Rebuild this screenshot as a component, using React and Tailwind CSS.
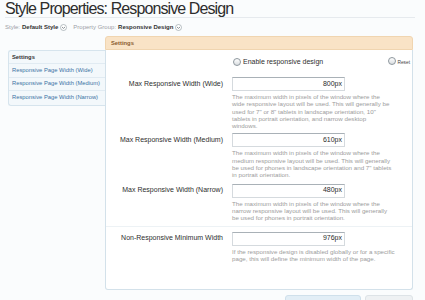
import React from "react";

const sans = "font-['Liberation_Sans','Arial',sans-serif]";

const rows = [
  {
    label: "Max Responsive Width (Wide)",
    value: "800px",
    gap: "mt-[10px]",
    desc: [
      "The maximum width in pixels of the window where the",
      "wide responsive layout will be used. This will generally be",
      'used for 7" or 8" tablets in landscape orientation, 10"',
      "tablets in portrait orientation, and narrow desktop",
      "windows.",
    ],
  },
  {
    label: "Max Responsive Width (Medium)",
    value: "610px",
    gap: "mt-[4px]",
    desc: [
      "The maximum width in pixels of the window where the",
      "medium responsive layout will be used. This will generally",
      'be used for phones in landscape orientation and 7" tablets',
      "in portrait orientation.",
    ],
  },
  {
    label: "Max Responsive Width (Narrow)",
    value: "480px",
    gap: "mt-[5px]",
    desc: [
      "The maximum width in pixels of the window where the",
      "narrow responsive layout will be used. This will generally",
      "be used for phones in portrait orientation.",
    ],
  },
];

const Chevron = () => (
  <svg width="7" height="7" viewBox="0 0 7 7" className="ml-[2px] shrink-0">
    <circle cx="3.5" cy="3.5" r="3" fill="#fff" stroke="#9aa3aa" strokeWidth="0.7" />
    <path d="M2 3 L3.5 4.4 L5 3" fill="none" stroke="#6d767d" strokeWidth="0.8" />
  </svg>
);

const Radio = ({ size = "w-[8px] h-[8px]" }) => (
  <span
    className={`${size} rounded-full border border-[#8e979e] bg-gradient-to-b from-white to-[#d9dde0] shrink-0`}
  />
);

const Row = ({ row }) => (
  <div className={`flex ${row.gap}`}>
    <div className="w-[117px] h-[14px] flex items-center justify-end text-[7px] text-[#2e2e2e] whitespace-nowrap">
      {row.label}
    </div>
    <div className="ml-[9px]">
      <div className="w-[113px] h-[14px] bg-white border border-[#d5dade] border-t-[#a9b1b7] flex items-center justify-end pr-[2px] text-[7px] text-[#2b2b2b]">
        {row.value}
      </div>
      <div className="mt-[2px] text-[6.2px] leading-[7.3px] text-[#9c9c9c]">
        {row.desc.map((line) => (
          <div key={line} className="whitespace-nowrap">
            {line}
          </div>
        ))}
      </div>
    </div>
  </div>
);

export default function App() {
  return (
    <div className={`h-[300px] overflow-hidden bg-[#fafcfd] ${sans}`}>
      <div className="pl-[5px] pr-[10px]">
        <h1 className="text-[16px] leading-[17px] tracking-[-0.9px] text-[#2d2d2d] border-b border-[#e6eaee] whitespace-nowrap">
          Style Properties: Responsive Design
        </h1>
        <div className="mt-[5px] h-[8px] flex items-center text-[6px] whitespace-nowrap">
          <span className="text-[#9aa0a6]">Style:</span>
          <span className="ml-[2px] font-bold text-[#333]">Default Style</span>
          <Chevron />
          <span className="ml-[6px] text-[#9aa0a6]">Property Group:</span>
          <span className="ml-[2px] font-bold text-[#333]">Responsive Design</span>
          <Chevron />
        </div>
      </div>

      <div className="flex pl-[8px] mt-[5px]">
        {/* Sidebar */}
        <div className="w-[97px] mt-[14px] self-start bg-[#f3f8fb] border border-r-0 border-[#d6e4ed] rounded-l-[3px] text-[5.8px] whitespace-nowrap">
          <div className="h-[13px] flex items-center pl-[3px] font-bold text-[#333] border-b border-[#e1ebf2]">
            Settings
          </div>
          {["Wide", "Medium", "Narrow"].map((w, i) => (
            <div
              key={w}
              className={`h-[13.5px] flex items-center pl-[3px] text-[#3a72a4] ${
                i < 2 ? "border-b border-[#e1ebf2]" : ""
              }`}
            >
              Responsive Page Width ({w})
            </div>
          ))}
        </div>

        {/* Main */}
        <div className="w-[308px]">
          <div className="h-[14px] bg-[#f9e3c6] border border-[#f0d5b0] rounded-t-[3px] flex items-center pl-[5px] text-[5.8px] font-bold text-[#8a5c2e]">
            Settings
          </div>
          <div className="h-[240px] bg-white border border-t-0 border-[#d3e1ea] rounded-b-[3px] pt-[7px]">
            <div className="flex h-[10px]">
              <div className="w-[117px]" />
              <div className="ml-[10px] flex-1 flex justify-between pr-[2px]">
                <div className="flex items-center gap-[2px] text-[7px] text-[#2e2e2e]">
                  <Radio />
                  Enable responsive design
                </div>
                <div className="flex items-start gap-[1px] text-[4.8px] text-[#444] pt-[0px]">
                  <Radio />
                  <span className="mt-[2px]">Reset</span>
                </div>
              </div>
            </div>

            {rows.map((row) => (
              <Row key={row.label} row={row} />
            ))}

            <div className="mt-[4px] border-t border-[#edf2f5]" />

            <Row
              row={{
                label: "Non-Responsive Minimum Width",
                value: "976px",
                gap: "mt-[5px]",
                desc: [
                  "If the responsive design is disabled globally or for a specific",
                  "page, this will define the minimum width of the page.",
                ],
              }}
            />
          </div>

          <div className="mt-[5px] flex justify-end gap-[4px]">
            <div className="w-[76px] h-[14px] rounded-[3px] bg-[#e2eef6] border border-[#cfe0eb]" />
            <div className="w-[48px] h-[14px] rounded-[3px] bg-[#eef1f3] border border-[#dde3e7]" />
          </div>
        </div>
      </div>
    </div>
  );
}
